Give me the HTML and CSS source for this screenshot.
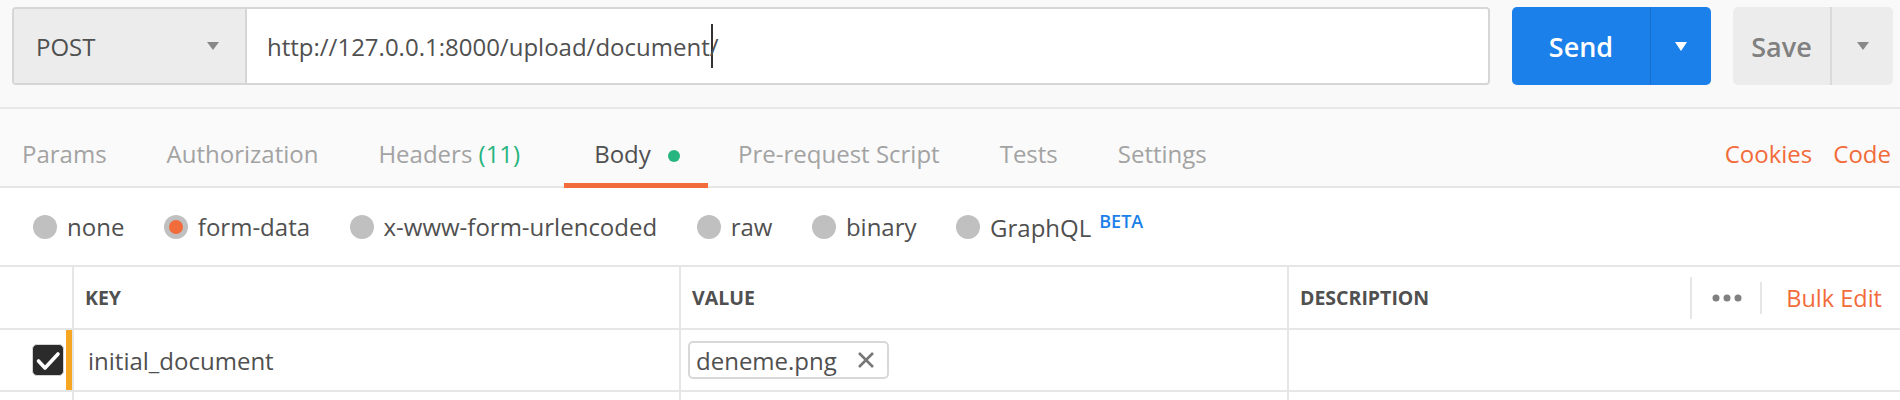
FILE: index.html
```html
<!DOCTYPE html>
<html lang="en">
<head>
    <meta charset="UTF-8">
    <title>Request Builder</title>
    <link rel="stylesheet" href="styles.css">
</head>
<body>
    <div class="request-bar">
        <div class="url-group">
            <div class="method">POST <span class="caret caret-grey"></span></div>
            <div class="url">http://127.0.0.1:8000/upload/document<span class="cursor"></span>/</div>
        </div>
        <div class="split-btn send-btn">
            <span class="btn-main">Send</span>
            <span class="btn-arrow"><span class="caret caret-white"></span></span>
        </div>
        <div class="split-btn save-btn">
            <span class="btn-main">Save</span>
            <span class="btn-arrow"><span class="caret caret-grey"></span></span>
        </div>
    </div>

    <div class="tabs">
        <div class="tab">Params</div>
        <div class="tab">Authorization</div>
        <div class="tab">Headers <span class="count">(11)</span></div>
        <div class="tab active">Body <span class="dot"></span></div>
        <div class="tab">Pre-request Script</div>
        <div class="tab">Tests</div>
        <div class="tab">Settings</div>
        <div class="tab-links">
            <span>Cookies</span>
            <span>Code</span>
        </div>
    </div>

    <div class="body-types">
        <label class="radio-item"><span class="radio"></span>none</label>
        <label class="radio-item"><span class="radio checked"></span>form-data</label>
        <label class="radio-item"><span class="radio"></span>x-www-form-urlencoded</label>
        <label class="radio-item"><span class="radio"></span>raw</label>
        <label class="radio-item"><span class="radio"></span>binary</label>
        <label class="radio-item"><span class="radio"></span><span>GraphQL<sup class="beta">BETA</sup></span></label>
    </div>

    <div class="kv-table">
        <div class="kv-row kv-head">
            <div class="cell"></div>
            <div class="cell">KEY</div>
            <div class="cell">VALUE</div>
            <div class="cell desc-cell">
                DESCRIPTION
                <div class="head-tools">
                    <span class="tool-sep tall"></span>
                    <svg class="more" width="30" height="8" viewBox="0 0 30 8">
                        <circle cx="4" cy="4" r="3.5"/>
                        <circle cx="15" cy="4" r="3.5"/>
                        <circle cx="26" cy="4" r="3.5"/>
                    </svg>
                    <span class="tool-sep"></span>
                    <span class="bulk-edit">Bulk Edit</span>
                </div>
            </div>
        </div>
        <div class="kv-row">
            <div class="cell check-cell">
                <span class="checkbox">
                    <svg width="32" height="32" viewBox="0 0 32 32"><path d="M6.5 17l6.5 7L26 10" fill="none" stroke="#fff" stroke-width="3.6" stroke-linecap="round" stroke-linejoin="round"/></svg>
                </span>
            </div>
            <div class="cell key-cell">initial_document</div>
            <div class="cell value-cell">
                <span class="file-chip">deneme.png
                    <svg width="18" height="18" viewBox="0 0 18 18"><path d="M2 2l14 14M16 2L2 16" stroke="#777" stroke-width="2.6"/></svg>
                </span>
            </div>
            <div class="cell"></div>
        </div>
        <div class="kv-row">
            <div class="cell"></div>
            <div class="cell"></div>
            <div class="cell"></div>
            <div class="cell"></div>
        </div>
    </div>
</body>
</html>
```

FILE: styles.css
```css
body {
    margin: 0;
    width: 1900px;
    font-family: "Open Sans", "Noto Sans", sans-serif;
    font-size: 24px;
    color: #505050;
    background: #fff;
    overflow: hidden;
}

/* request bar */
.request-bar {
    display: flex;
    padding: 7px 7px 22px 12px;
    background: #f9f9f9;
    border-bottom: 2px solid #e8e8e8;
}

.url-group {
    display: flex;
    width: 1478px;
    height: 78px;
    box-sizing: border-box;
    border: 2px solid #d6d6d6;
    border-radius: 4px;
    overflow: hidden;
}

.method {
    width: 233px;
    box-sizing: border-box;
    display: flex;
    align-items: center;
    justify-content: space-between;
    padding: 0 26px 0 22px;
    background: #ececec;
    border-right: 2px solid #d6d6d6;
}

.url {
    flex: 1;
    display: flex;
    align-items: center;
    padding-left: 20px;
    background: #fff;
}

.cursor {
    display: inline-block;
    width: 2px;
    height: 44px;
    margin-left: 1px;
    margin-right: -3px;
    background: #333;
}

.caret {
    display: inline-block;
    width: 0;
    height: 0;
    border-left: 6px solid transparent;
    border-right: 6px solid transparent;
}

.caret-grey {
    border-top: 8px solid #888;
}

.caret-white {
    border-top: 9px solid #fff;
}

.split-btn {
    display: flex;
    height: 78px;
    margin-left: 22px;
    border-radius: 5px;
    font-size: 27px;
    font-weight: 600;
}

.split-btn .btn-main {
    display: flex;
    align-items: center;
    justify-content: center;
}

.split-btn .btn-arrow {
    display: flex;
    align-items: center;
    justify-content: center;
    flex: 1;
}

.send-btn {
    width: 199px;
    background: #1b80e9;
    color: #fff;
}

.send-btn .btn-main {
    width: 138px;
    border-right: 1px solid #176fcd;
}

.save-btn {
    width: 160px;
    background: #ececec;
    color: #808080;
}

.save-btn .btn-main {
    width: 97px;
    border-right: 2px solid #dadada;
}

/* tabs */
.tabs {
    display: flex;
    background: #fafafa;
    border-bottom: 2px solid #e6e6e6;
}

.tab {
    height: 79px;
    box-sizing: border-box;
    padding: 29px 30px 0;
    margin-bottom: -2px;
    line-height: 32px;
    color: #a3a3a3;
    border-bottom: 5px solid transparent;
}

.tab:first-child {
    padding-left: 22px;
}

.tab.active {
    padding-right: 28px;
    color: #505050;
    border-bottom-color: #f26b3a;
}

.count {
    margin-right: 14px;
    color: #26b47f;
}

.dot {
    display: inline-block;
    width: 12px;
    height: 12px;
    margin-left: 11px;
    border-radius: 50%;
    background: #26b47f;
    vertical-align: 1px;
}

.tab-links {
    display: flex;
    gap: 21px;
    margin-left: auto;
    padding: 29px 9px 0 0;
    line-height: 32px;
    color: #f26b3a;
}

/* body type radios */
.body-types {
    display: flex;
    align-items: center;
    gap: 39.5px;
    height: 77px;
    padding-left: 33px;
}

.radio-item {
    display: flex;
    align-items: center;
    gap: 10px;
}

.radio {
    display: inline-flex;
    align-items: center;
    justify-content: center;
    width: 24px;
    height: 24px;
    border-radius: 50%;
    background: #c0c0c0;
}

.radio.checked::after {
    content: "";
    width: 14px;
    height: 14px;
    border-radius: 50%;
    background: #f26b3a;
}

.beta {
    margin-left: 8px;
    font-size: 18px;
    font-weight: 600;
    color: #1b80e9;
}

/* key / value table */
.kv-table {
    border-top: 2px solid #e6e6e6;
}

.kv-row {
    display: grid;
    grid-template-columns: 74px 607px 608px 1fr;
    height: 60px;
    border-bottom: 2px solid #e6e6e6;
}

.kv-head {
    height: 61px;
    font-size: 19.5px;
    font-weight: 700;
}

.cell {
    display: flex;
    align-items: center;
    padding-left: 11px;
    border-right: 2px solid #e6e6e6;
}

.cell:last-child {
    border-right: none;
}

.check-cell {
    padding-left: 32px;
    box-shadow: inset -6px 0 0 #f5a623;
}

.checkbox {
    display: flex;
    width: 32px;
    height: 32px;
    box-sizing: border-box;
    border: 1px solid #d4d4d4;
    border-radius: 5px;
    background: #2b2b2b;
}

.checkbox svg {
    margin: -1px;
}

.key-cell {
    padding-left: 14px;
}

.value-cell {
    padding-left: 7px;
}

.file-chip {
    display: flex;
    align-items: center;
    gap: 20px;
    height: 38px;
    box-sizing: border-box;
    padding: 0 12px 0 6px;
    border: 2px solid #d8d8d8;
    border-radius: 5px;
}

.desc-cell {
    padding-right: 18px;
}

.head-tools {
    display: flex;
    align-items: center;
    margin-left: auto;
    font-weight: 400;
    font-size: 23.5px;
}

.tool-sep {
    width: 2px;
    height: 32px;
    background: #e6e6e6;
}

.tool-sep.tall {
    height: 42px;
    margin-right: 20px;
}

.more {
    fill: #808080;
    margin-right: 18px;
}

.bulk-edit {
    margin-left: 24px;
    color: #f26b3a;
}
```
